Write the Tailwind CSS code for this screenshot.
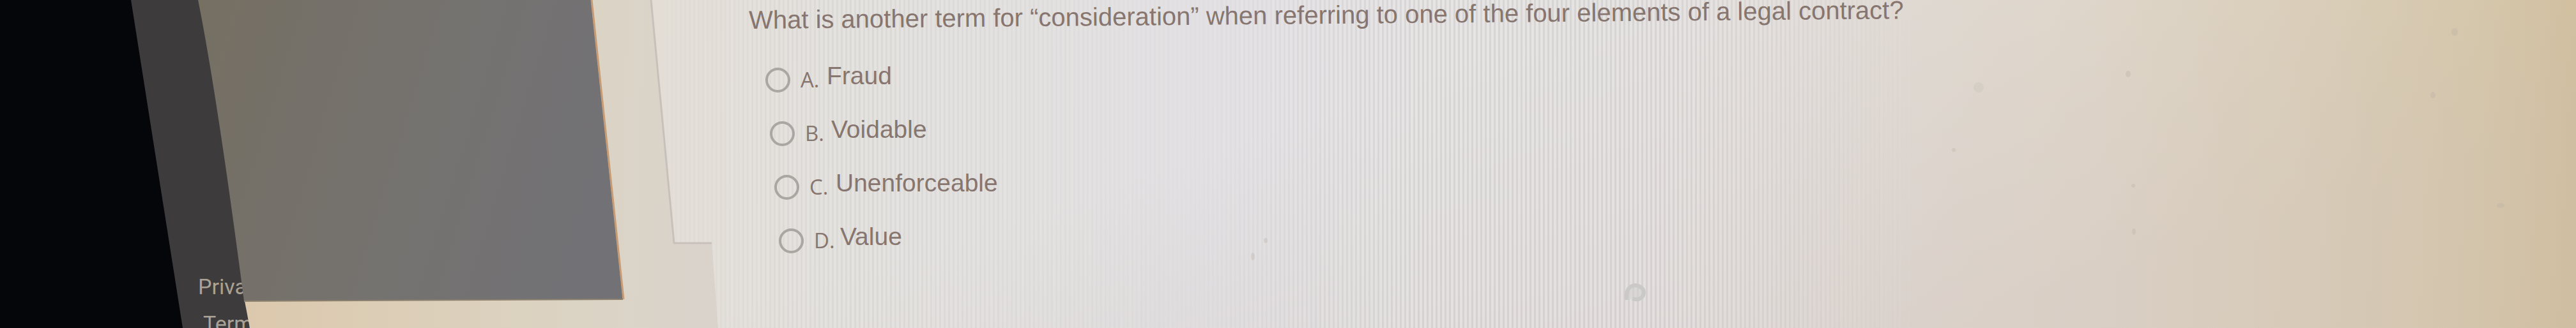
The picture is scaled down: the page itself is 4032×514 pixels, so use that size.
<!DOCTYPE html>
<html lang="en">
<head>
    <meta charset="UTF-8">
    <meta name="viewport" content="width=device-width, initial-scale=1.0">
    <title>Quiz Question</title>
    <script src="https://cdn.jsdelivr.net/npm/@tailwindcss/browser@4"></script>
</head>
<body class="bg-[#dcd6cc]">
    <div class="relative flex min-h-screen overflow-hidden">
        <!-- page surface -->
        <svg class="absolute inset-0 w-full h-full" viewBox="0 0 4032 514" preserveAspectRatio="none" aria-hidden="true">
            <defs>
                <linearGradient id="page" gradientUnits="userSpaceOnUse" x1="380" y1="0" x2="4032" y2="90">
                    <stop offset="0" stop-color="#dcc8ac"/>
                    <stop offset="0.08" stop-color="#dccfb9"/>
                    <stop offset="0.16" stop-color="#dbd4c6"/>
                    <stop offset="0.2" stop-color="#dad3cc"/>
                    <stop offset="1" stop-color="#dad3cc"/>
                </linearGradient>
                <linearGradient id="card" gradientUnits="userSpaceOnUse" x1="1019" y1="0" x2="4032" y2="150">
                    <stop offset="0" stop-color="#e3ddd5"/>
                    <stop offset="0.1" stop-color="#e1dfdb"/>
                    <stop offset="0.3" stop-color="#e2e0e3"/>
                    <stop offset="0.5" stop-color="#dfdddd"/>
                    <stop offset="0.62" stop-color="#e1dcd7"/>
                    <stop offset="0.75" stop-color="#e1d9cc"/>
                    <stop offset="0.86" stop-color="#ddd2bb"/>
                    <stop offset="0.95" stop-color="#d8caa9"/>
                    <stop offset="1" stop-color="#d4c19a"/>
                </linearGradient>
                <linearGradient id="shade" gradientUnits="userSpaceOnUse" x1="2000" y1="200" x2="2200" y2="800">
                    <stop offset="0" stop-color="#c8b8b4" stop-opacity="0"/>
                    <stop offset="1" stop-color="#c8b8b4" stop-opacity="0.3"/>
                </linearGradient>
                <linearGradient id="fade" x1="0" y1="0" x2="1" y2="0">
                    <stop offset="0" stop-color="#fff" stop-opacity="0.1"/>
                    <stop offset="0.15" stop-color="#fff" stop-opacity="0.5"/>
                    <stop offset="0.42" stop-color="#fff" stop-opacity="0.1"/>
                    <stop offset="0.6" stop-color="#fff" stop-opacity="0.8"/>
                    <stop offset="0.8" stop-color="#fff" stop-opacity="0.8"/>
                    <stop offset="1" stop-color="#fff" stop-opacity="0"/>
                </linearGradient>
                <pattern id="lines" width="7" height="514" patternUnits="userSpaceOnUse">
                    <rect width="3" height="514" fill="#cfcccb"/>
                    <rect x="3" width="4" height="514" fill="#edebea"/>
                </pattern>
                <mask id="lines-mask">
                    <rect x="1040" width="1960" height="514" fill="url(#fade)"/>
                </mask>
            </defs>
            <rect width="4032" height="514" fill="url(#page)"/>
            <path d="M1019 0L1055 381H1114L1124 514H4032V0Z" fill="url(#card)"/>
            <path d="M1019 0L1055 381H1114L1124 514H4032V0Z" fill="url(#shade)"/>
            <path d="M1019 0L1055 381H1114L1124 514H3000V0Z" fill="url(#lines)" mask="url(#lines-mask)" opacity="0.6"/>
            <path d="M1019 0L1055 381H1114" fill="none" stroke="#c8c1bb" stroke-width="3"/>
            <path d="M0 0H320L392 514H0Z" fill="#3e3b3d"/>
            <path d="M0 0H205L286 514H0Z" fill="#040609"/>
            <!-- specks -->
            <g fill="#b9b2a6" fill-opacity="0.35">
                <ellipse cx="1981" cy="377" rx="3" ry="4"/>
                <ellipse cx="1961" cy="402" rx="3" ry="6"/>
                <ellipse cx="3097" cy="137" rx="8" ry="8" fill-opacity="0.2"/>
                <ellipse cx="3331" cy="116" rx="4" ry="5"/>
                <ellipse cx="3058" cy="235" rx="3" ry="3"/>
                <ellipse cx="3339" cy="291" rx="3" ry="3"/>
                <ellipse cx="3340" cy="363" rx="3" ry="5"/>
                <ellipse cx="3842" cy="50" rx="5" ry="6"/>
                <ellipse cx="3808" cy="149" rx="4" ry="5"/>
                <ellipse cx="3914" cy="322" rx="6" ry="4"/>
            </g>
            <path d="M2546 470Q2544 448 2560 447Q2576 450 2572 463Q2566 472 2555 468" fill="#d0cdcc" fill-opacity="0.5" stroke="#cbc8c8" stroke-width="6"/>
        </svg>

        <aside class="relative w-[1172px] shrink-0 pt-[420px] font-['Roboto',sans-serif] text-[34px] leading-[58px] text-[#aaa294]">
            <nav class="absolute flex flex-col">
                <a href="#privacy" class="pl-[310px]">Priva</a>
                <a href="#terms" class="pl-[318px]">Term</a>
            </nav>
        </aside>

        <!-- grey overlay, covers the end of the sidebar links -->
        <svg class="absolute inset-0 w-full h-full pointer-events-none" viewBox="0 0 4032 514" preserveAspectRatio="none" aria-hidden="true">
            <defs>
                <linearGradient id="overlay" gradientUnits="userSpaceOnUse" x1="310" y1="0" x2="960" y2="200">
                    <stop offset="0" stop-color="#767063"/>
                    <stop offset="0.3" stop-color="#757069"/>
                    <stop offset="0.6" stop-color="#757370"/>
                    <stop offset="1" stop-color="#727175"/>
                </linearGradient>
            </defs>
            <path d="M383 472L391 514H480V472Z" fill="url(#page)"/>
            <path d="M310 0Q340 150 382 472L975 469L925 0Z" fill="url(#overlay)"/>
            <path d="M926 0L976 469" stroke="#c79c74" stroke-width="3"/>
            <path d="M382 472L975 469" stroke="#8d826f" stroke-width="2"/>
        </svg>

        <main class="relative flex-1 font-['Liberation_Sans',Arial,sans-serif] text-[39px] text-[#87766f]">
            <form>
                <fieldset>
                    <legend class="origin-left -rotate-[0.5deg] whitespace-nowrap pt-2 text-[40px] leading-[46px]">What is another term for “consideration” when referring to one of the four elements of a legal contract?</legend>
                    <div class="flex flex-col gap-[38px] pt-[48px] leading-[46px]">
                        <label class="flex h-[46px] items-center pl-[26px]">
                            <input type="radio" name="answer" value="A" class="size-[39px] shrink-0 appearance-none rounded-full border-4 border-[#aaa6a2]">
                            <span class="ml-4 w-[41px] font-['Open_Sans',sans-serif] text-[33px] leading-[34px]">A.</span>
                            <span class="pb-3">Fraud</span>
                        </label>
                        <label class="flex h-[46px] items-center pl-[33px]">
                            <input type="radio" name="answer" value="B" class="size-[39px] shrink-0 appearance-none rounded-full border-4 border-[#aaa6a2]">
                            <span class="ml-4 w-[41px] font-['Open_Sans',sans-serif] text-[33px] leading-[34px]">B.</span>
                            <span class="pb-3">Voidable</span>
                        </label>
                        <label class="flex h-[46px] items-center pl-[40px]">
                            <input type="radio" name="answer" value="C" class="size-[39px] shrink-0 appearance-none rounded-full border-4 border-[#aaa6a2]">
                            <span class="ml-4 w-[41px] font-['Open_Sans',sans-serif] text-[33px] leading-[34px]">C.</span>
                            <span class="pb-3">Unenforceable</span>
                        </label>
                        <label class="flex h-[46px] items-center pl-[47px]">
                            <input type="radio" name="answer" value="D" class="size-[39px] shrink-0 appearance-none rounded-full border-4 border-[#aaa6a2]">
                            <span class="ml-4 w-[41px] font-['Open_Sans',sans-serif] text-[33px] leading-[34px]">D.</span>
                            <span class="pb-3">Value</span>
                        </label>
                    </div>
                </fieldset>
            </form>
        </main>
    </div>
</body>
</html>
